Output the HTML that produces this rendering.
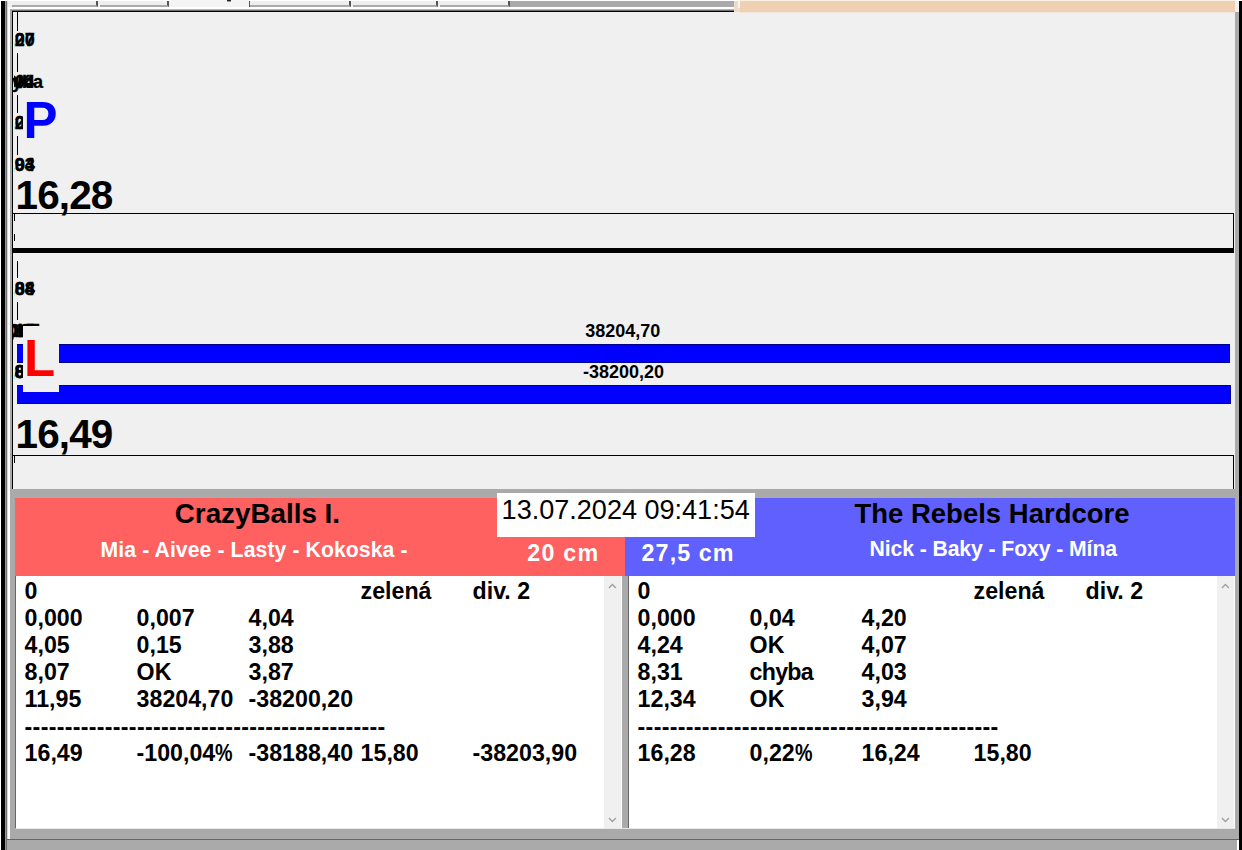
<!DOCTYPE html>
<html lang="cs"><head><meta charset="utf-8"><title>Scoreboard</title>
<style>
html,body{margin:0;padding:0}
body{width:1242px;height:850px;overflow:hidden;background:#f0f0f0;position:relative;font-family:"Liberation Sans",sans-serif;color:#000}
div{position:absolute;box-sizing:border-box}
.t{white-space:pre;font-weight:bold}
.s{font-size:18px;line-height:20px;height:20px;width:80px;text-align:center;font-weight:bold;white-space:pre;-webkit-text-stroke:0.35px #000}
.clipP{left:13px;top:12px;width:1222px;height:236px;overflow:hidden}
.clipL{left:13px;top:253px;width:1222px;height:236px;overflow:hidden}
.seg{width:1px;background:#000}
.big{font-size:40.5px;line-height:44px;font-weight:bold;white-space:pre;letter-spacing:-0.9px}
.lab{width:36px;height:66px;background:#f0f0f0;font-size:51px;font-weight:bold;line-height:58px}
.bar{background:#0000ff}
.row{font-size:23.2px;line-height:27px;height:27px;font-weight:bold;white-space:pre}
.list{background:#fff;overflow:hidden}
.pc{display:inline-block;transform:scaleX(.85);transform-origin:0 50%}
</style></head><body>

<div style="left:0;top:0;width:1242px;height:1px;background:#fff"></div>
<div style="left:12px;top:1px;width:86px;height:6px;background:#eee;border-bottom:2px solid #aaa;border-right:2px solid #555"></div>
<div style="left:100px;top:1px;width:69px;height:6px;background:#eee;border-bottom:2px solid #aaa;border-right:2px solid #555"></div>
<div style="left:170px;top:0;width:79px;height:9px;background:#f4f4f4"></div>
<div style="left:250px;top:1px;width:101px;height:6px;background:#eee;border-bottom:2px solid #aaa;border-right:2px solid #555"></div>
<div style="left:353px;top:1px;width:85px;height:6px;background:#eee;border-bottom:2px solid #aaa;border-right:2px solid #555"></div>
<div style="left:440px;top:1px;width:70px;height:6px;background:#eee;border-bottom:2px solid #aaa;border-right:2px solid #555"></div>
<div style="left:227px;top:0;width:4px;height:1px;background:#222"></div><div style="left:227px;top:1px;width:4px;height:1px;background:#999"></div><div style="left:249px;top:1px;width:1px;height:6px;background:#555"></div>
<div style="left:510px;top:1px;width:224px;height:6px;background:#aaa"></div>
<div style="left:10px;top:7px;width:724px;height:2px;background:#fff"></div>
<div style="left:10px;top:9px;width:724px;height:1px;background:#b4b4b4"></div>
<div style="left:10px;top:10px;width:724px;height:1px;background:#707070"></div>
<div style="left:12px;top:11px;width:722px;height:1px;background:#000"></div>
<div style="left:734px;top:1px;width:4px;height:11px;background:#ecdccc"></div>
<div style="left:738px;top:0;width:2px;height:12px;background:#f4dcc4"></div>
<div style="left:738px;top:0;width:2px;height:8px;background:#fff6ea"></div>
<div style="left:740px;top:0;width:495px;height:1px;background:#fbf0e2"></div>
<div style="left:740px;top:1px;width:495px;height:11px;background:#f0d0b2"></div>
<div style="left:740px;top:12px;width:495px;height:1px;background:#f0e6dc"></div>
<div style="left:0;top:0;width:1px;height:850px;background:#fff"></div>
<div style="left:1px;top:1px;width:4px;height:849px;background:#000"></div>
<div style="left:5px;top:1px;width:1px;height:849px;background:#999"></div>
<div style="left:6px;top:1px;width:1px;height:849px;background:#707070"></div>
<div style="left:7px;top:1px;width:1px;height:839px;background:#d8d8d8"></div>
<div style="left:8px;top:7px;width:2px;height:833px;background:#fff"></div>
<div style="left:10px;top:9px;width:2px;height:831px;background:#aaa"></div>
<div style="left:12px;top:11px;width:1px;height:478px;background:#000"></div>
<div style="left:1235px;top:12px;width:4px;height:838px;background:#aaa"></div>
<div style="left:1239px;top:1px;width:3px;height:849px;background:#000"></div>
<div class="clipP">
<div class="seg" style="left:4px;top:0px;height:19px"></div>
<div class="seg" style="left:4px;top:41px;height:19px"></div>
<div class="seg" style="left:4px;top:83px;height:18px"></div>
<div class="seg" style="left:4px;top:124px;height:19px"></div>
<div style="left:1.4000000000000004px;top:14.5px;width:120px;height:26px;overflow:hidden">
<div class="s" style="left:-37.1px;top:3px">4,20</div>
<div class="s" style="left:-37.1px;top:3px">4,07</div>
</div>
<div style="left:1.4000000000000004px;top:56.5px;width:120px;height:26px;overflow:hidden">
<div class="s" style="left:-37.1px;top:3px">0,04</div>
<div class="s" style="left:-37.1px;top:3px">OK</div>
</div>
<div style="left:0px;top:56.5px;width:120px;height:26px;overflow:hidden">
<div class="s" style="left:-36.1px;top:3px">chyba</div>
</div>
<div style="left:1.4000000000000004px;top:97.5px;width:120px;height:26px;overflow:hidden">
<div class="s" style="left:-37.1px;top:3px">4,20</div>
<div class="s" style="left:-37.1px;top:3px">4,07</div>
</div>
<div style="left:1.4000000000000004px;top:139.8px;width:120px;height:26px;overflow:hidden">
<div class="s" style="left:-37.1px;top:3px">4,03</div>
<div class="s" style="left:-37.1px;top:3px">3,94</div>
</div>
<div class="lab" style="left:10px;top:76px;color:#0000ff"><span style="position:absolute;left:0.5px;top:3.5px">P</span></div>
<div class="big" style="left:2.5999999999999996px;top:161px">16,28</div>
<div style="left:0;top:201px;width:1221px;height:40px;border-top:1px solid #000;border-right:1px solid #000"></div>
<div class="seg" style="left:1px;top:202px;height:7px"></div>
<div class="seg" style="left:1px;top:222px;height:7px"></div>
</div>
<div style="left:13px;top:248px;width:1221px;height:5px;background:#000"></div>
<div class="clipL">
<div class="seg" style="left:4px;top:8px;height:17px"></div>
<div class="seg" style="left:4px;top:49px;height:18px"></div>
<div style="left:1.4000000000000004px;top:22.5px;width:120px;height:26px;overflow:hidden">
<div class="s" style="left:-37.1px;top:3px">4,04</div>
<div class="s" style="left:-37.1px;top:3px">3,88</div>
</div>
<div style="left:0px;top:64.5px;width:120px;height:26px;overflow:hidden">
<div class="s" style="left:-35.7px;top:3px">0,007</div>
<div class="s" style="left:-35.7px;top:3px">0,15</div>
<div class="s" style="left:-35.7px;top:3px">OK</div>
</div>
<div style="left:1.4000000000000004px;top:105.80000000000001px;width:120px;height:26px;overflow:hidden">
<div class="s" style="left:-37.1px;top:3px">4,04</div>
<div class="s" style="left:-37.1px;top:3px">3,88</div>
<div class="s" style="left:-37.1px;top:3px">3,87</div>
</div>
<div class="bar" style="left:4px;top:91px;width:1213px;height:19px;border:1px solid #00008c;border-left:none"></div>
<div class="bar" style="left:4px;top:132px;width:1214px;height:19px;border:1px solid #00008c;border-left:none"></div>
<div class="lab" style="left:10px;top:73px;color:#ff0000"><span style="position:absolute;left:1px;top:3.5px">L</span></div>
<div class="s" style="left:509.70000000000005px;width:200px;top:67.5px;-webkit-text-stroke:0">38204,70</div>
<div class="s" style="left:510.5px;width:200px;top:108.80000000000001px;-webkit-text-stroke:0">-38200,20</div>
<div class="big" style="left:2.5999999999999996px;top:159px">16,49</div>
<div style="left:0;top:202px;width:1221px;height:40px;border-top:1px solid #000;border-right:1px solid #000"></div>
<div class="seg" style="left:1px;top:203px;height:7px"></div>
</div>
<div style="left:10px;top:489px;width:1225px;height:361px;background:#aaa"></div>
<div style="left:15px;top:498px;width:610px;height:78px;background:#ff6060"></div>
<div style="left:625px;top:498px;width:610px;height:78px;background:#6060ff"></div>
<div style="left:497px;top:493px;width:258px;height:44px;background:#fff"></div>
<div class="t" style="font-size:27.05px;line-height:32px;top:493.83px;left:325.70000000000005px;width:600px;text-align:center;font-weight:normal;">13.07.2024 09:41:54</div>
<div class="t" style="font-size:27.8px;line-height:33px;top:497.37px;left:-42.60000000000002px;width:600px;text-align:center;">CrazyBalls I.</div>
<div class="t" style="font-size:27.5px;line-height:33px;top:497.27px;left:692px;width:600px;text-align:center;">The Rebels Hardcore</div>
<div class="t" style="font-size:21.2px;line-height:25px;top:536.65px;left:-45.900000000000006px;width:600px;text-align:center;color:#fff;letter-spacing:0.093px;">Mia - Aivee - Lasty - Kokoska -</div>
<div class="t" style="font-size:21.2px;line-height:25px;top:536.45px;left:693.2px;width:600px;text-align:center;color:#fff;letter-spacing:-0.083px;">Nick - Baky - Foxy - Mína</div>
<div class="t" style="font-size:23.3px;line-height:28px;top:538.73px;left:527.2px;color:#fff;letter-spacing:1.25px;">20 cm</div>
<div class="t" style="font-size:23.3px;line-height:28px;top:538.73px;left:641.6px;color:#fff;letter-spacing:1.07px;">27,5 cm</div>
<div style="left:15px;top:576px;width:1px;height:252px;background:#666"></div>
<div class="list" style="left:16px;top:576px;width:588px;height:252px">
<div class="row" style="left:8.600000000000001px;top:2px;">0</div>
<div class="row" style="left:344.6px;top:2px;">zelená</div>
<div class="row" style="left:456.6px;top:2px;">div. 2</div>
<div class="row" style="left:8.600000000000001px;top:29px;">0,000</div>
<div class="row" style="left:120.6px;top:29px;">0,007</div>
<div class="row" style="left:232.6px;top:29px;">4,04</div>
<div class="row" style="left:8.600000000000001px;top:56px;">4,05</div>
<div class="row" style="left:120.6px;top:56px;">0,15</div>
<div class="row" style="left:232.6px;top:56px;">3,88</div>
<div class="row" style="left:8.600000000000001px;top:83px;">8,07</div>
<div class="row" style="left:120.6px;top:83px;">OK</div>
<div class="row" style="left:232.6px;top:83px;">3,87</div>
<div class="row" style="left:8.600000000000001px;top:110px;">11,95</div>
<div class="row" style="left:120.6px;top:110px;">38204,70</div>
<div class="row" style="left:232.6px;top:110px;">-38200,20</div>
<div class="row" style="left:8.600000000000001px;top:137px;letter-spacing:0.3px;margin-top:1px;">---------------------------------------------</div>
<div class="row" style="left:8.600000000000001px;top:164px;">16,49</div>
<div class="row" style="left:120.6px;top:164px;">-100,04<span class="pc">%</span></div>
<div class="row" style="left:232.6px;top:164px;">-38188,40</div>
<div class="row" style="left:344.6px;top:164px;">15,80</div>
<div class="row" style="left:456.6px;top:164px;">-38203,90</div>
</div>
<div style="left:604px;top:576px;width:17px;height:252px;background:#f0f0f0"></div>
<svg style="position:absolute;left:608px;top:583px" width="9" height="6" viewBox="0 0 9 6"><path d="M0.9 5 L4.4 1.5 L7.9 5" fill="none" stroke="#a0a0a0" stroke-width="1.3"/></svg>
<svg style="position:absolute;left:608px;top:817px" width="9" height="6" viewBox="0 0 9 6"><path d="M0.9 1 L4.4 4.5 L7.9 1" fill="none" stroke="#a0a0a0" stroke-width="1.3"/></svg>
<div style="left:621px;top:576px;width:1px;height:253px;background:#fff"></div>
<div style="left:628px;top:576px;width:1px;height:252px;background:#666"></div>
<div class="list" style="left:629px;top:576px;width:588px;height:252px">
<div class="row" style="left:8.600000000000023px;top:2px;">0</div>
<div class="row" style="left:344.6px;top:2px;">zelená</div>
<div class="row" style="left:456.5999999999999px;top:2px;">div. 2</div>
<div class="row" style="left:8.600000000000023px;top:29px;">0,000</div>
<div class="row" style="left:120.60000000000002px;top:29px;">0,04</div>
<div class="row" style="left:232.60000000000002px;top:29px;">4,20</div>
<div class="row" style="left:8.600000000000023px;top:56px;">4,24</div>
<div class="row" style="left:120.60000000000002px;top:56px;">OK</div>
<div class="row" style="left:232.60000000000002px;top:56px;">4,07</div>
<div class="row" style="left:8.600000000000023px;top:83px;">8,31</div>
<div class="row" style="left:120.60000000000002px;top:83px;letter-spacing:-0.75px;">chyba</div>
<div class="row" style="left:232.60000000000002px;top:83px;">4,03</div>
<div class="row" style="left:8.600000000000023px;top:110px;">12,34</div>
<div class="row" style="left:120.60000000000002px;top:110px;">OK</div>
<div class="row" style="left:232.60000000000002px;top:110px;">3,94</div>
<div class="row" style="left:8.600000000000023px;top:137px;letter-spacing:0.3px;margin-top:1px;">---------------------------------------------</div>
<div class="row" style="left:8.600000000000023px;top:164px;">16,28</div>
<div class="row" style="left:120.60000000000002px;top:164px;">0,22<span class="pc">%</span></div>
<div class="row" style="left:232.60000000000002px;top:164px;">16,24</div>
<div class="row" style="left:344.6px;top:164px;">15,80</div>
</div>
<div style="left:1217px;top:576px;width:17px;height:252px;background:#f0f0f0"></div>
<svg style="position:absolute;left:1221px;top:583px" width="9" height="6" viewBox="0 0 9 6"><path d="M0.9 5 L4.4 1.5 L7.9 5" fill="none" stroke="#a0a0a0" stroke-width="1.3"/></svg>
<svg style="position:absolute;left:1221px;top:817px" width="9" height="6" viewBox="0 0 9 6"><path d="M0.9 1 L4.4 4.5 L7.9 1" fill="none" stroke="#a0a0a0" stroke-width="1.3"/></svg>
<div style="left:1234px;top:576px;width:1px;height:253px;background:#fff"></div>
<div style="left:16px;top:828px;width:1219px;height:1px;background:#e6e6e6"></div>
<div style="left:7px;top:839px;width:1232px;height:1px;background:#666"></div>
<div style="left:7px;top:840px;width:1230px;height:10px;background:#aaa"></div>
<div style="left:1237px;top:840px;width:2px;height:10px;background:#fff"></div>
</body></html>
